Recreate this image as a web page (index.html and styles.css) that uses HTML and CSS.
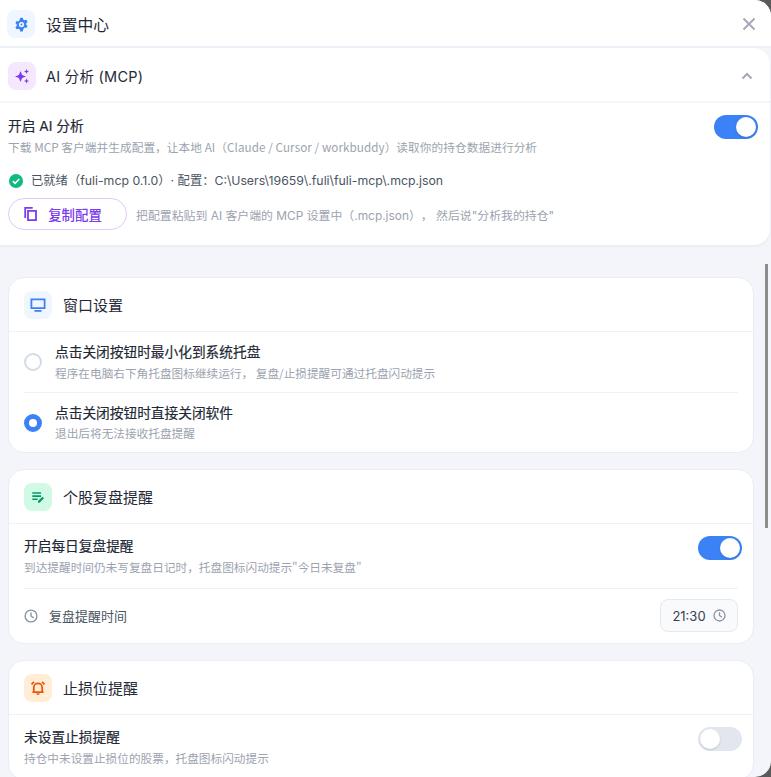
FILE: index.html
```html
<!DOCTYPE html>
<html lang="zh-CN">
  <head>
    <meta charset="UTF-8" />
    <title>设置中心</title>
    <link rel="stylesheet" href="styles.css">
  </head>
  <body>
    <main class="settings-window">
      <header class="window-header">
        <span class="icon-box is-blue">
          <svg viewBox="0 0 24 24" width="15" height="15"><path fill="currentColor" fill-rule="evenodd" d="M10 1h4l.7 3 2.100 1.200 3-.9 2 3.400-2.200 2.100v2.400l2.200 2.100-2 3.400-3-.9L14.700 20 14 23h-4l-.7-3-2.100-1.200-3 .9-2-3.400 2.200-2.100V11.800L2.200 9.700l2-3.400 3 .9L9.300 4zM12 7.800a4.200 4.200 0 1 0 0 8.400 4.200 4.200 0 0 0 0-8.400z"/><circle cx="12" cy="12" r="1.600" fill="currentColor"/></svg>
        </span>
        <h1 class="window-title">设置中心</h1>
        <button class="close-button" aria-label="关闭">
          <svg viewBox="0 0 14 14" width="14" height="14"><path fill="none" stroke="currentColor" stroke-width="1.900" d="M1.500 1.500l11 11M12.500 1.500l-11 11"/></svg>
        </button>
      </header>

      <section class="ai-card">
        <div class="ai-header">
          <span class="icon-box is-purple">
            <svg viewBox="0 0 16 16" width="16" height="16"><path fill="currentColor" d="M6.500 3l1.600 3.900L12 8.500l-3.900 1.600L6.500 14l-1.600-3.900L1 8.500l3.900-1.600zM12.500 1l.7 1.800 1.800.7-1.800.7-.7 1.800-.7-1.800-1.800-.7 1.800-.7zM12.500 10.500l.7 1.800 1.800.7-1.800.7-.7 1.800-.7-1.800-1.800-.7 1.800-.7z"/></svg>
          </span>
          <h2 class="ai-title">AI 分析 (MCP)</h2>
          <svg class="chevron" viewBox="0 0 12 8" width="12" height="8"><path fill="none" stroke="currentColor" stroke-width="2" d="M1.500 6.500L6 2l4.500 4.500"/></svg>
        </div>
        <div class="ai-body">
          <div class="ai-toggle-row">
            <div>
              <div class="row-title">开启 AI 分析</div>
              <div class="row-desc">下载 MCP 客户端并生成配置，让本地 AI（Claude / Cursor / workbuddy）读取你的持仓数据进行分析</div>
            </div>
            <span class="switch is-on"></span>
          </div>
          <div class="status-line">
            <svg viewBox="0 0 14 14" width="14" height="14"><circle cx="7" cy="7" r="7" fill="#10b981"/><path fill="none" stroke="#fff" stroke-width="1.600" d="M3.800 7.200l2.300 2.200 4.200-4.400"/></svg>
            <span>已就绪（fuli-mcp 0.1.0）· 配置：C:\Users\19659\.fuli\fuli-mcp\.mcp.json</span>
          </div>
          <div class="copy-row">
            <button class="copy-button">
              <svg viewBox="0 0 14 14" width="14" height="14"><path fill="none" stroke="currentColor" stroke-width="1.800" d="M4 3.800h8v9.400H4zM1.200 11V.9h7.500"/></svg>
              复制配置
            </button>
            <span class="copy-hint">把配置粘贴到 AI 客户端的 MCP 设置中（.mcp.json）， 然后说"分析我的持仓"</span>
          </div>
        </div>
      </section>

      <div class="scroll-area">
        <section class="card">
          <div class="card-header">
            <span class="icon-box is-blue">
              <svg viewBox="0 0 16 16" width="16" height="16"><path fill="none" stroke="currentColor" stroke-width="1.800" d="M1.400 2.400h13.200v8.800H1.400z"/><path fill="currentColor" d="M4.500 13h7v1.800h-7z"/></svg>
            </span>
            <h3 class="card-title">窗口设置</h3>
          </div>
          <div class="card-body">
            <div class="option-row">
              <span class="radio"></span>
              <div>
                <div class="row-title">点击关闭按钮时最小化到系统托盘</div>
                <div class="row-desc">程序在电脑右下角托盘图标继续运行， 复盘/止损提醒可通过托盘闪动提示</div>
              </div>
            </div>
            <div class="option-row has-divider">
              <span class="radio is-checked"></span>
              <div>
                <div class="row-title">点击关闭按钮时直接关闭软件</div>
                <div class="row-desc">退出后将无法接收托盘提醒</div>
              </div>
            </div>
          </div>
        </section>

        <section class="card">
          <div class="card-header">
            <span class="icon-box is-green">
              <svg viewBox="0 0 16 16" width="14" height="14"><path fill="none" stroke="currentColor" stroke-width="1.800" d="M1.500 3.500h10M1.500 7h10M1.500 10.500h6"/><path fill="currentColor" d="M8 14.500v-1.800l5-5 1.800 1.800-5 5z"/></svg>
            </span>
            <h3 class="card-title">个股复盘提醒</h3>
          </div>
          <div class="card-body">
            <div class="toggle-row">
              <div>
                <div class="row-title">开启每日复盘提醒</div>
                <div class="row-desc">到达提醒时间仍未写复盘日记时，托盘图标闪动提示"今日未复盘"</div>
              </div>
              <span class="switch is-on"></span>
            </div>
            <div class="time-row has-divider">
              <span class="time-label">
                <svg class="clock" viewBox="0 0 14 14" width="14" height="14"><circle cx="7" cy="7" r="5.900" fill="none" stroke="currentColor" stroke-width="1.400"/><path fill="none" stroke="currentColor" stroke-width="1.400" d="M7 3.500V7l2.600 1.900"/></svg>
                复盘提醒时间
              </span>
              <span class="time-input">
                21:30
                <svg class="clock" viewBox="0 0 14 14" width="13" height="13"><circle cx="7" cy="7" r="5.900" fill="none" stroke="currentColor" stroke-width="1.400"/><path fill="none" stroke="currentColor" stroke-width="1.400" d="M7 3.500V7l2.600 1.900"/></svg>
              </span>
            </div>
          </div>
        </section>

        <section class="card">
          <div class="card-header">
            <span class="icon-box is-orange">
              <svg viewBox="0 0 16 16" width="16" height="16"><path fill="none" stroke="currentColor" stroke-width="1.800" d="M3.800 12V7.500a4.200 4.200 0 0 1 8.400 0V12M2.400 12.200h11.200M1.500 4.300L4 1.800M14.500 4.300L12 1.800"/><path fill="currentColor" d="M6.300 13.300h3.400a1.700 1.700 0 0 1-3.400 0z"/></svg>
            </span>
            <h3 class="card-title">止损位提醒</h3>
          </div>
          <div class="card-body">
            <div class="toggle-row">
              <div>
                <div class="row-title">未设置止损提醒</div>
                <div class="row-desc">持仓中未设置止损位的股票，托盘图标闪动提示</div>
              </div>
              <span class="switch"></span>
            </div>
          </div>
        </section>

        <div class="scroll-thumb"></div>
      </div>
    </main>
  </body>
</html>
```

FILE: styles.css
```css
*,
*::before,
*::after {
  box-sizing: border-box;
  margin: 0;
  padding: 0;
}

html,
body {
  height: 100%;
  overflow: hidden;
  background-color: #5a5a5a;
}

body {
  font-family: Inter, "Noto Sans CJK SC", sans-serif;
  color: #1f2937;
}

.settings-window {
  height: 777px;
  background-color: #f3f5fa;
  border-radius: 0 16px 16px 0;
  display: flex;
  flex-direction: column;
  overflow: hidden;
}

.window-header {
  height: 48px;
  flex-shrink: 0;
  background-color: #fff;
  border-bottom: 2px solid #eef1f7;
  display: flex;
  align-items: center;
  gap: 11px;
  padding: 2px 15px 0 7px;
}

.window-title {
  font-size: 15.750px;
  font-weight: 400;
  flex: 1;
}

.close-button {
  border: none;
  background: none;
  color: #a4a9b5;
  display: flex;
}

.icon-box {
  width: 28px;
  height: 28px;
  border-radius: 8px;
  flex-shrink: 0;
  display: flex;
  align-items: center;
  justify-content: center;
}

.is-blue {
  background-color: #eff6ff;
  color: #3b82f6;
}

.is-purple {
  background-color: #f3e8ff;
  color: #7c3aed;
}

.is-green {
  background-color: #d1fae5;
  color: #059669;
}

.is-orange {
  background-color: #ffedd5;
  color: #ea580c;
}

.ai-card {
  height: 197px;
  flex-shrink: 0;
  background-color: #fff;
  margin-right: 1px;
  border-radius: 0 16px 16px 0;
  box-shadow: 0 1px 3px rgba(15, 23, 42, 0.06);
}

.ai-header {
  height: 55px;
  border-bottom: 2px solid #f3f5fa;
  display: flex;
  align-items: center;
  gap: 10px;
  padding: 2px 17px 0 8px;
}

.ai-title {
  font-size: 14.500px;
  font-weight: 400;
  letter-spacing: 0.25px;
  flex: 1;
}

.chevron {
  color: #a4a9b5;
}

.ai-body {
  padding: 14px 12px 0 8px;
}

.ai-toggle-row,
.toggle-row {
  display: flex;
  justify-content: space-between;
  align-items: flex-start;
}

.ai-toggle-row .switch {
  margin-top: -2px;
}

.ai-toggle-row .row-desc {
  letter-spacing: 0.07px;
}

.row-title {
  font-size: 13.700px;
  line-height: 18px;
  font-weight: 400;
  color: #1f2937;
  -webkit-text-stroke: 0.2px #1f2937;
}

.row-desc {
  font-family: "Noto Sans CJK SC", sans-serif;
  font-size: 11.670px;
  line-height: 16px;
  margin-top: 3.500px;
  color: #9ca3af;
  text-spacing-trim: space-all;
}

.switch {
  width: 44px;
  height: 24px;
  border-radius: 12px;
  background-color: #e2e6ee;
  padding: 2px;
  display: flex;
  flex-shrink: 0;
}

.switch::before {
  content: "";
  width: 20px;
  height: 20px;
  border-radius: 50%;
  background-color: #fff;
  box-shadow: 0 1px 2px rgba(0, 0, 0, 0.15);
}

.switch.is-on {
  background-color: #3b82f6;
  justify-content: flex-end;
}

.status-line {
  display: flex;
  align-items: center;
  gap: 8px;
  margin: 17px 0 0 1px;
  font-size: 12.300px;
  line-height: 18px;
  color: #4b5563;
  text-spacing-trim: space-all;
}

.copy-row {
  display: flex;
  align-items: center;
  gap: 9px;
  margin-top: 8.500px;
}

.copy-button {
  width: 119px;
  height: 32px;
  padding-right: 9px;
  border: 1.500px solid #e2c8fb;
  border-radius: 16px;
  background-color: #fff;
  color: #7c3aed;
  font-family: inherit;
  font-size: 13.400px;
  font-weight: 500;
  display: flex;
  align-items: center;
  justify-content: center;
  gap: 10px;
}

.copy-hint {
  font-size: 11.900px;
  color: #9ca3af;
  text-spacing-trim: space-all;
}

.scroll-area {
  position: relative;
  flex: 1;
  overflow: hidden;
  padding: 32px 17px 0 8px;
  display: flex;
  flex-direction: column;
  gap: 16px;
}

.scroll-thumb {
  position: absolute;
  top: 19px;
  right: 3px;
  width: 3px;
  height: 264px;
  background-color: #8d8d8d;
}

.card {
  flex-shrink: 0;
  background-color: #fff;
  border: 1px solid #e9edf4;
  border-radius: 16px;
}

.card-header {
  height: 54px;
  border-bottom: 1px solid #eef1f6;
  display: flex;
  align-items: center;
  gap: 11px;
  padding: 0 15px;
}

.card-title {
  font-size: 15px;
  font-weight: 400;
}

.card-body {
  padding: 0 15px;
}

.option-row {
  height: 60px;
  display: flex;
  align-items: center;
  gap: 13px;
}

.has-divider {
  border-top: 1px solid #eef1f6;
}

.radio {
  width: 18px;
  height: 18px;
  border-radius: 50%;
  border: 2px solid #d5dbe6;
  flex-shrink: 0;
}

.radio.is-checked {
  border: 5.500px solid #3b82f6;
}

.toggle-row {
  padding: 13px 0 13.500px;
}

.toggle-row .switch {
  margin: -1px -4px 0 0;
}

.time-row {
  height: 55px;
  padding-bottom: 1px;
  display: flex;
  align-items: center;
  justify-content: space-between;
}

.time-label {
  display: flex;
  align-items: center;
  gap: 11px;
  font-size: 13px;
  color: #4b5563;
}

.clock {
  color: #8b93a3;
}

.time-input {
  width: 78px;
  height: 33px;
  border: 1px solid #e5e8f0;
  border-radius: 8px;
  background-color: #f9fafb;
  font-size: 13px;
  color: #374151;
  display: flex;
  align-items: center;
  justify-content: center;
  gap: 7px;
}
```
